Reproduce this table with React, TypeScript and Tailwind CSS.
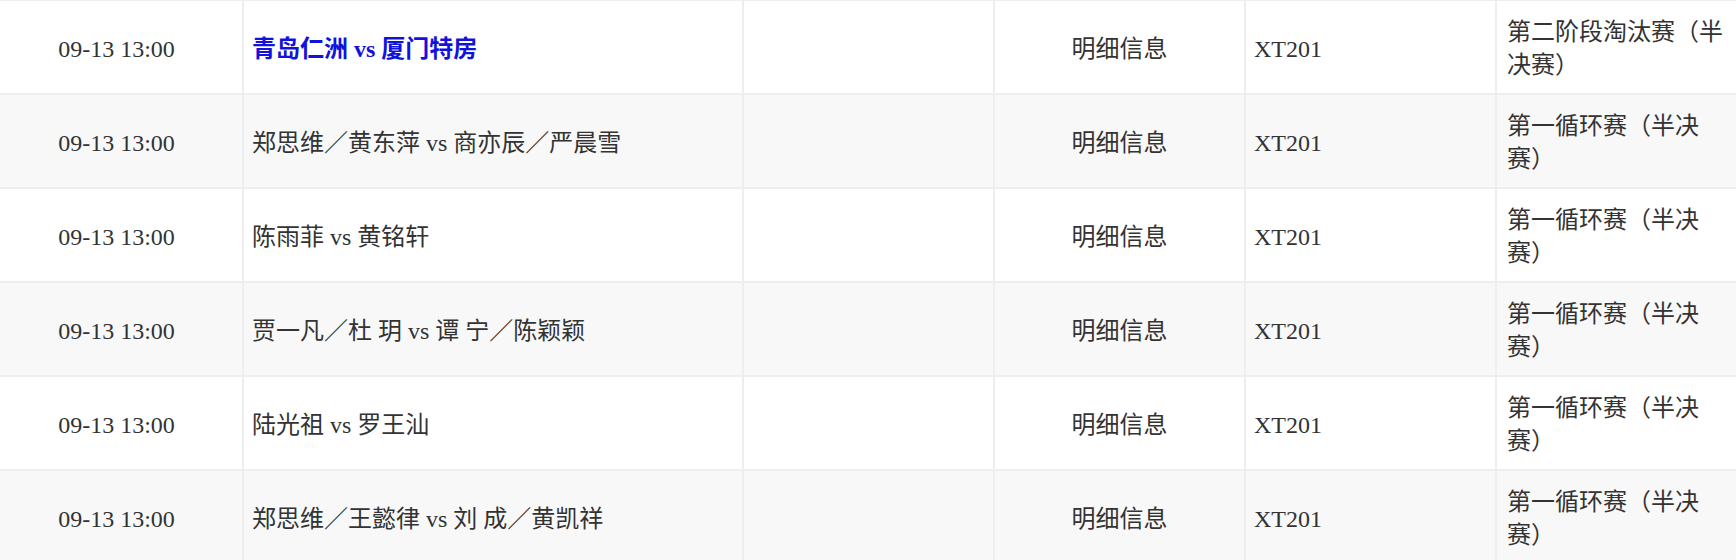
import React from 'react';

interface Match {
  time: string;
  title: string;
  link?: boolean;
  info: string;
  court: string;
  stage: string;
}

const matches: Match[] = [
  { time: '09-13 13:00', title: '青岛仁洲 vs 厦门特房', link: true, info: '明细信息', court: 'XT201', stage: '第二阶段淘汰赛（半决赛）' },
  { time: '09-13 13:00', title: '郑思维／黄东萍 vs 商亦辰／严晨雪', info: '明细信息', court: 'XT201', stage: '第一循环赛（半决赛）' },
  { time: '09-13 13:00', title: '陈雨菲 vs 黄铭轩', info: '明细信息', court: 'XT201', stage: '第一循环赛（半决赛）' },
  { time: '09-13 13:00', title: '贾一凡／杜 玥 vs 谭 宁／陈颖颖', info: '明细信息', court: 'XT201', stage: '第一循环赛（半决赛）' },
  { time: '09-13 13:00', title: '陆光祖 vs 罗王汕', info: '明细信息', court: 'XT201', stage: '第一循环赛（半决赛）' },
  { time: '09-13 13:00', title: '郑思维／王懿律 vs 刘 成／黄凯祥', info: '明细信息', court: 'XT201', stage: '第一循环赛（半决赛）' },
];

const cell = 'border-2 border-[#eceef1] pt-[15px] pb-[11px] align-middle';

export default function App() {
  return (
    <div
      className="w-[1736px] h-[560px] overflow-hidden bg-white text-[#333] text-[24px] leading-[33px]"
      style={{ fontFamily: '"Liberation Serif", "Noto Sans CJK SC", serif' }}
    >
      <table className="table-fixed border-collapse w-[1740px] -ml-[2px] -mt-[1px]">
        <colgroup>
          <col className="w-[244px]" />
          <col className="w-[500px]" />
          <col className="w-[251px]" />
          <col className="w-[251px]" />
          <col className="w-[251px]" />
          <col className="w-[243px]" />
        </colgroup>
        <tbody>
          {matches.map((m, i) => (
            <tr key={i} className={i % 2 === 1 ? 'bg-[#f8f8f9]' : 'bg-white'}>
              <td className={`${cell} text-center pr-[9px]`}>{m.time}</td>
              <td className={`${cell} pl-[8px] pr-[10px]`}>
                {m.link ? (
                  <span className="font-bold text-[#1212dd]">{m.title}</span>
                ) : (
                  m.title
                )}
              </td>
              <td className={cell}></td>
              <td className={`${cell} text-center`}>{m.info}</td>
              <td className={`${cell} px-[8px]`}>{m.court}</td>
              <td className={`${cell} pl-[10px] pr-[6px]`}>{m.stage}</td>
            </tr>
          ))}
        </tbody>
      </table>
    </div>
  );
}
